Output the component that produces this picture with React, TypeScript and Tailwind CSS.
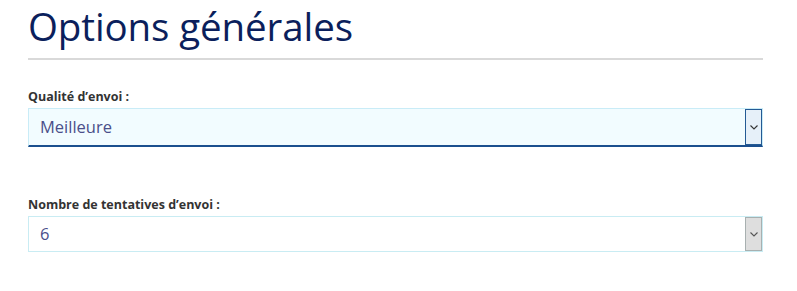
import React from "react";

function Chevron({ color }: { color: string }) {
  return (
    <svg width="8" height="5" viewBox="0 0 8 5" fill="none">
      <path d="M0.5 0.5 L4 4 L7.5 0.5" stroke={color} strokeWidth="1.1" />
    </svg>
  );
}

export default function App() {
  return (
    <div
      className="w-[797px] h-[291px] bg-white pl-[28px] pr-[34px] pt-[1px]"
      style={{ fontFamily: '"Open Sans", "Noto Sans", sans-serif' }}
    >
      <h1 className="text-[38.5px] leading-[51px] text-[#0b1f5c] font-normal tracking-[-0.1px]">
        Options générales
      </h1>
      <div className="mt-[6px] h-[2px] bg-[#d9d9d9]" />

      <div className="mt-[28px]">
        <div className="text-[12.5px] font-bold text-[#333333] leading-[17px]">Qualité d’envoi :</div>
        <div className="mt-[3px] h-[39px] flex border border-[#c9ecf7] border-b-2 border-b-[#1b4f8e] bg-[#f2fcff]">
          <div className="flex-1 flex items-center pl-[11px] text-[16.5px] text-[#4b4f8a]">Meilleure</div>
          <div className="w-[17px] flex items-center justify-center border border-[#245a94] bg-[#e6f0f9]">
            <Chevron color="#333" />
          </div>
        </div>
      </div>

      <div className="mt-[49px]">
        <div className="text-[12.5px] font-bold text-[#333333] leading-[17px]">Nombre de tentatives d’envoi :</div>
        <div className="mt-[3px] h-[36px] flex border border-[#c9ecf3] bg-white">
          <div className="flex-1 flex items-center pl-[11px] text-[16.5px] text-[#4b4f8a]">6</div>
          <div className="w-[17px] flex items-center justify-center border border-[#a8b0b0] bg-[#dedede]">
            <Chevron color="#555" />
          </div>
        </div>
      </div>
    </div>
  );
}
